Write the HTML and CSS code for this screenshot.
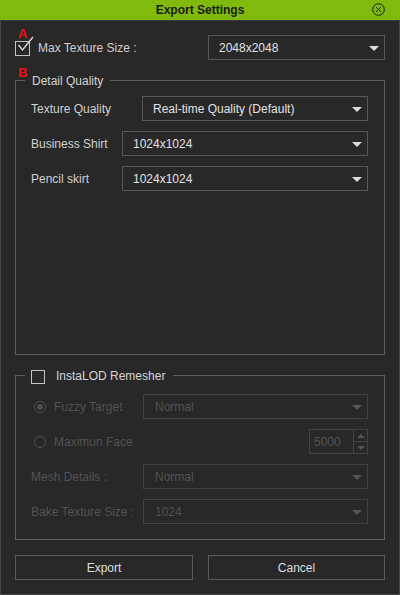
FILE: index.html
```html
<!DOCTYPE html>
<html>
<head>
<meta charset="utf-8">
<link rel="stylesheet" href="styles.css">
</head>
<body>
<div class="window">
  <div class="titlebar">
    <span></span>
    <span class="title">Export Settings</span>
    <svg class="close" width="13" height="13" viewBox="0 0 13 13"><circle cx="6.5" cy="6.5" r="5.8" fill="none" stroke="#1c1c1c" stroke-width="1"/><path d="M4 4 L9 9 M9 4 L4 9" stroke="#1c1c1c" stroke-width="1"/></svg>
  </div>
  <div class="content">
    <div class="row top-row">
      <span class="marker marker-a">A</span>
      <span class="checkbox">
        <svg class="tick" width="20" height="20" viewBox="0 0 20 20"><path d="M2.5 9 L6.5 14 L17 1" fill="none" stroke="#d8d8d8" stroke-width="1.4"/></svg>
      </span>
      <span class="label max-label">Max Texture Size :</span>
      <div class="select max-select"><span>2048x2048</span><i class="arrow"></i></div>
    </div>

    <div class="group detail">
      <span class="marker marker-b">B</span>
      <div class="legend">Detail Quality</div>
      <div class="rows">
        <div class="row">
          <span class="label w111">Texture Quality</span>
          <div class="select grow"><span>Real-time Quality (Default)</span><i class="arrow"></i></div>
        </div>
        <div class="row">
          <span class="label w91">Business Shirt</span>
          <div class="select grow"><span>1024x1024</span><i class="arrow"></i></div>
        </div>
        <div class="row">
          <span class="label w91">Pencil skirt</span>
          <div class="select grow"><span>1024x1024</span><i class="arrow"></i></div>
        </div>
      </div>
    </div>

    <div class="group lod">
      <div class="legend lod-legend"><span class="checkbox small"></span><span>InstaLOD Remesher</span></div>
      <div class="rows lod-rows">
        <div class="row">
          <span class="label w112 disabled"><span class="radio on"></span>Fuzzy Target</span>
          <div class="select grow off"><span>Normal</span><i class="arrow"></i></div>
        </div>
        <div class="row">
          <span class="label disabled"><span class="radio"></span>Maximun Face</span>
          <div class="spin">
            <span class="spin-val">5000</span>
            <span class="spin-btns"><i class="up"></i><i class="down"></i></span>
          </div>
        </div>
        <div class="row">
          <span class="label w112 disabled">Mesh Details :</span>
          <div class="select grow off"><span>Normal</span><i class="arrow"></i></div>
        </div>
        <div class="row">
          <span class="label w112 disabled">Bake Texture Size :</span>
          <div class="select grow off"><span>1024</span><i class="arrow"></i></div>
        </div>
      </div>
    </div>

    <div class="buttons">
      <div class="btn export">Export</div>
      <div class="btn cancel">Cancel</div>
    </div>
  </div>
</div>
</body>
</html>
```

FILE: styles.css
```css
* { box-sizing: border-box; }
html, body { margin: 0; padding: 0; background: #282828; }
body {
  font-family: "Liberation Sans", Arial, sans-serif;
  font-size: 12px;
  color: #d0d0d0;
}
.window {
  width: 400px;
  height: 595px;
  display: flex;
  flex-direction: column;
  background: #282828;
  border-left: 1px solid #474747;
  border-right: 1px solid #474747;
  border-bottom: 1px solid #474747;
}
.titlebar {
  height: 21px;
  flex: none;
  background: #7fba0c;
  border-bottom: 1px solid #3a3a3a;
  display: grid;
  grid-template-columns: 1fr auto 1fr;
  align-items: center;
  margin: 0 -1px;
}
.title {
  font-weight: bold;
  color: #1a1a1a;
  font-size: 12px;
  line-height: 20px;
}
.close { justify-self: end; margin-right: 15px; margin-top: -1px; }
.content {
  flex: 1;
  display: flex;
  flex-direction: column;
  padding: 14px 14px 14px 14px;
}
.row {
  display: flex;
  align-items: center;
  height: 25px;
  position: relative;
}
.marker {
  position: absolute;
  color: #f01010;
  font-weight: bold;
  font-size: 13px;
  line-height: 13px;
}
.marker-a { left: 3px; top: -8px; }
.marker-b { left: 2px; top: -15px; }
.checkbox {
  width: 15px;
  height: 15px;
  border: 1px solid #c4c4c4;
  position: relative;
  flex: none;
}
.top-row .checkbox { margin-top: 1px; }
.tick { position: absolute; left: 0px; top: -6px; }
.max-label { margin-left: 8px; }
.label { white-space: nowrap; flex: none; display: flex; align-items: center; }
.w111 { width: 111px; }
.w91 { width: 91px; }
.w112 { width: 112px; }
.select {
  height: 25px;
  border: 1px solid #585858;
  display: flex;
  align-items: center;
  justify-content: space-between;
  padding: 0 5px 0 10px;
  color: #e2e2e2;
}
.max-select { width: 177px; margin-left: auto; }
.grow { flex: 1; }
.arrow {
  width: 0; height: 0;
  border-left: 5px solid transparent;
  border-right: 5px solid transparent;
  border-top: 5px solid #dcdcdc;
  margin-top: 1px;
}
.group {
  border: 1px solid #5e5e5e;
  display: flex;
  flex-direction: column;
  position: relative;
}
.detail { flex: 1; margin-top: 20px; }
.lod { margin-top: 20px; flex: none; }
.legend {
  align-self: flex-start;
  height: 16px;
  line-height: 16px;
  margin-top: -8px;
  margin-left: 9px;
  padding: 0 7px;
  background: #282828;
  color: #d4d4d4;
}
.lod-legend { display: flex; align-items: center; padding: 0 8px 0 6px; gap: 11px; }
.checkbox.small { width: 14px; height: 14px; margin-top: 2px; }
.rows {
  display: flex;
  flex-direction: column;
  gap: 10px;
  padding: 7px 16px 0 15px;
}
.lod-rows { padding: 10px 16px 15px 15px; }
.disabled { color: #525252; }
.off { border-color: #424242; color: #525252; padding-left: 11px; }
.off .arrow { border-top-color: #555; }
.radio {
  width: 12px; height: 12px;
  border: 1.5px solid #4e4e4e;
  border-radius: 50%;
  margin-left: 3px;
  margin-right: 8px;
  display: inline-flex;
  align-items: center;
  justify-content: center;
}
.radio.on::after {
  content: "";
  width: 6px; height: 6px;
  border-radius: 50%;
  background: #4e4e4e;
}
.spin {
  margin-left: auto;
  width: 59px;
  height: 25px;
  border: 1px solid #424242;
  display: flex;
  color: #525252;
}
.spin-val { flex: 1; padding-left: 4px; display: flex; align-items: center; }
.spin-btns {
  width: 14px;
  border-left: 1px solid #424242;
  display: flex;
  flex-direction: column;
}
.spin-btns i { flex: 1; display: flex; align-items: center; justify-content: center; }
.spin-btns .up { border-bottom: 1px solid #424242; }
.spin-btns .up::after {
  content: ""; width: 0; height: 0;
  border-left: 4px solid transparent; border-right: 4px solid transparent;
  border-bottom: 4px solid #555;
}
.spin-btns .down::after {
  content: ""; width: 0; height: 0;
  border-left: 4px solid transparent; border-right: 4px solid transparent;
  border-top: 4px solid #555;
}
.buttons {
  display: flex;
  gap: 15px;
  margin-top: 15px;
  flex: none;
}
.btn {
  height: 25px;
  border: 1px solid #5a5a5a;
  display: flex;
  align-items: center;
  justify-content: center;
  color: #dedede;
}
.export { width: 178px; }
.cancel { width: 177px; }
```
